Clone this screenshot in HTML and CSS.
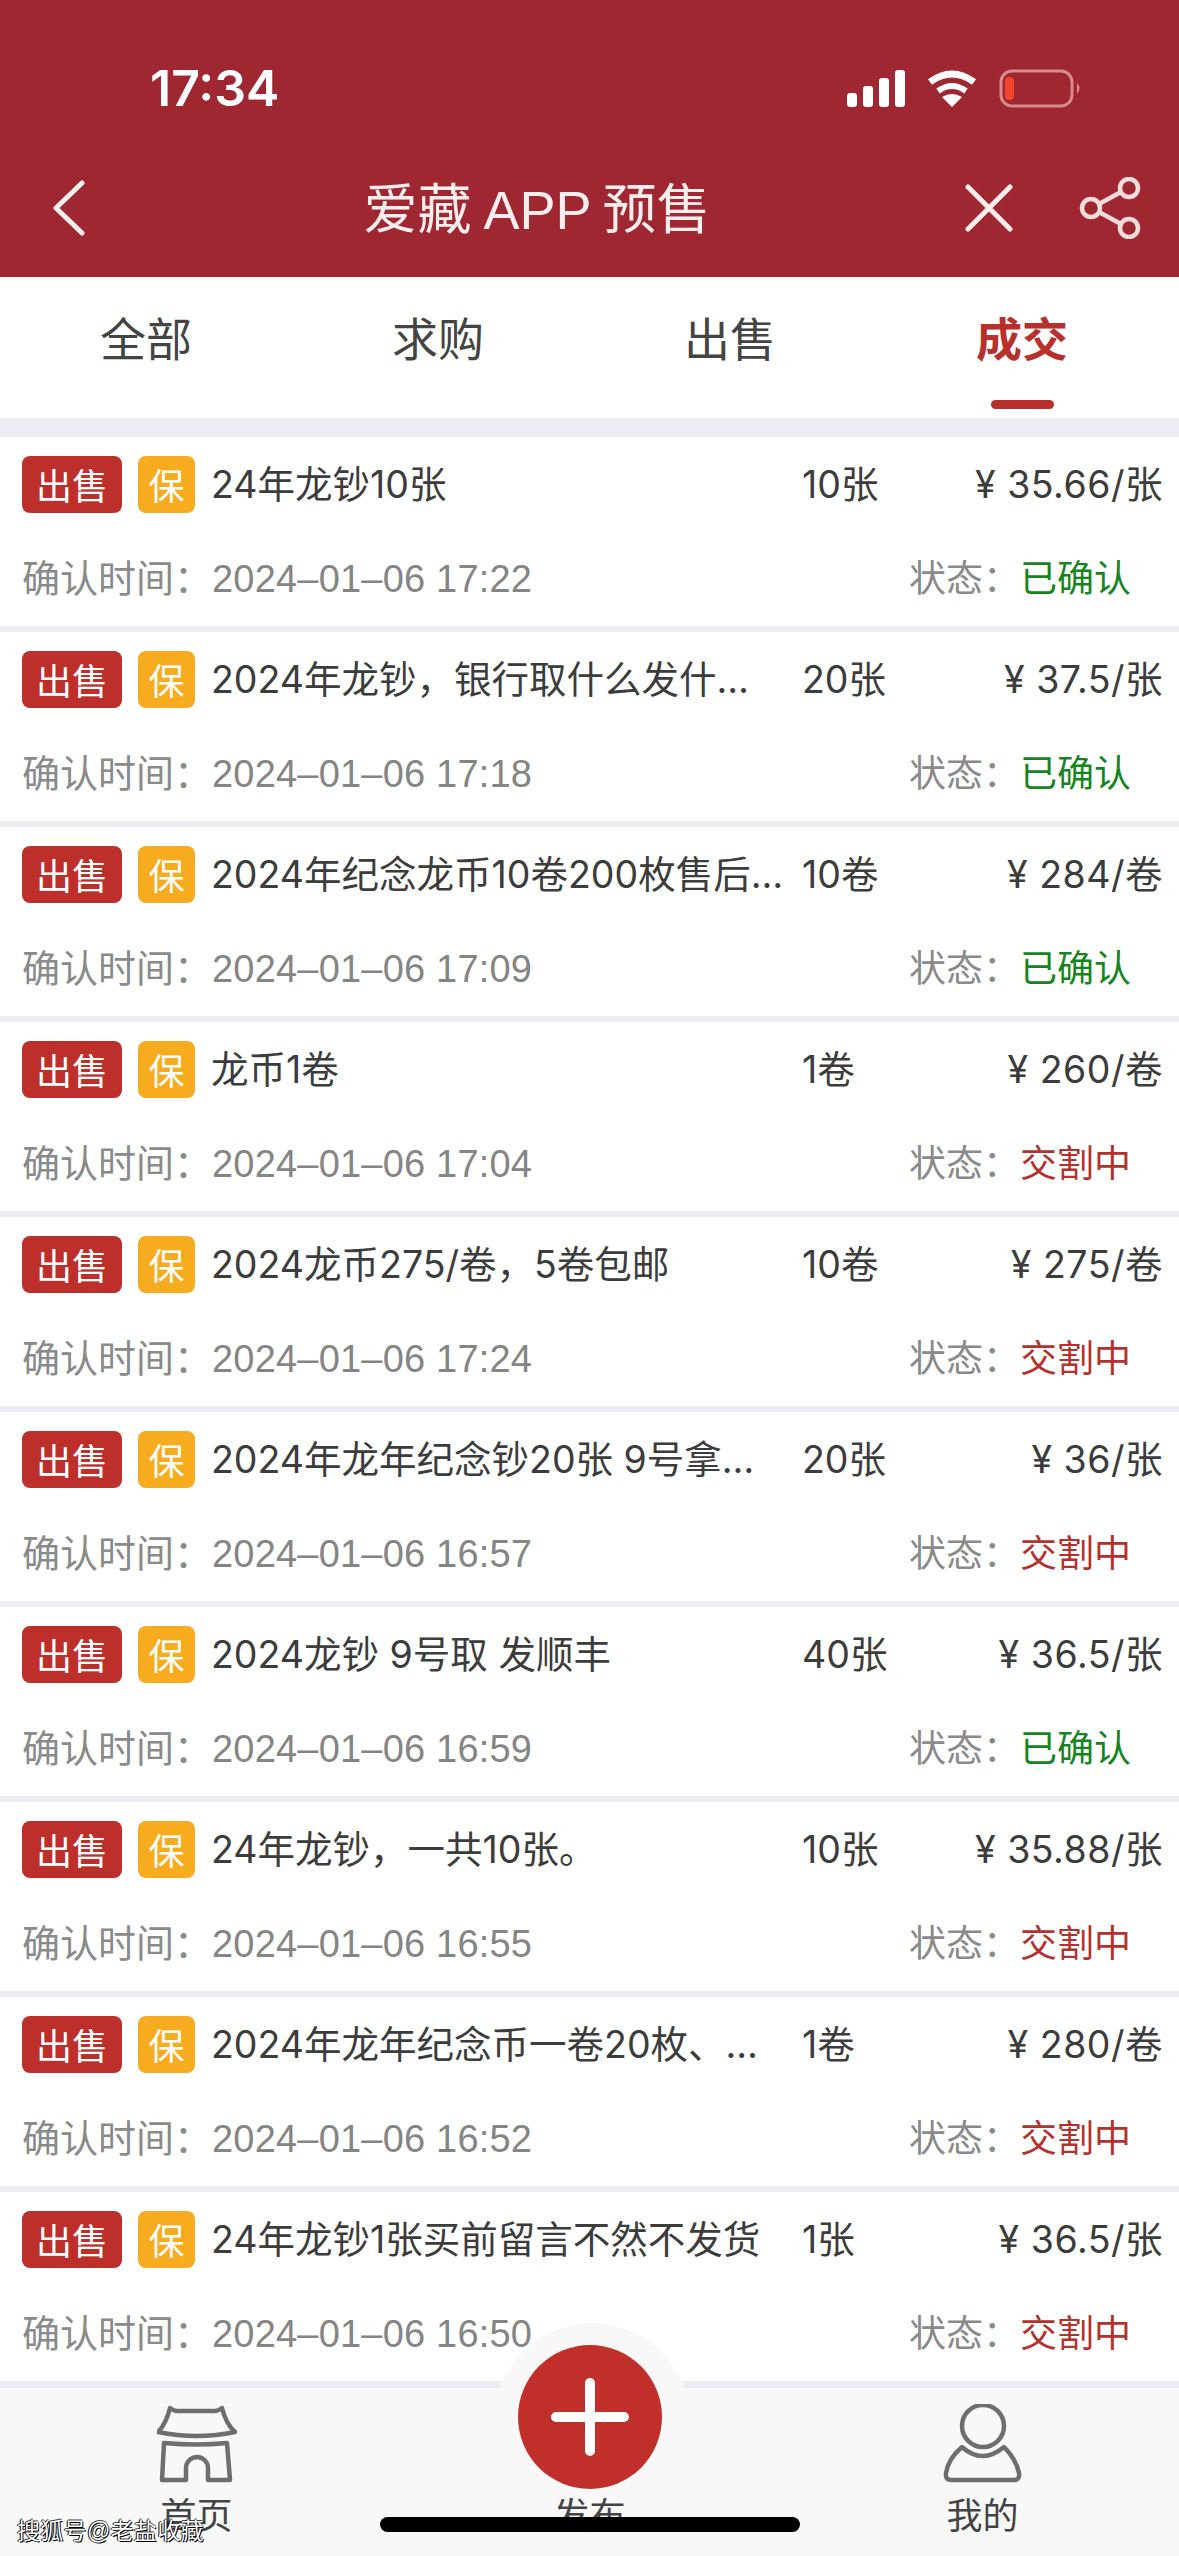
FILE: index.html
```html
<!DOCTYPE html>
<html lang="zh-CN">
    <head>
        <meta charset="UTF-8">
        <title>爱藏 APP 预售</title>
        <link rel="stylesheet" href="styles.css">
    </head>
    <body>
    <div class="page">
        <header class="head">
            <div class="status-bar">
                <div class="clock">17:34</div>
                <div class="status-icons">
                    <svg class="icon-signal" width="58" height="37" viewBox="0 0 58 37">
                        <rect x="0" y="23" width="10" height="14" rx="3"/>
                        <rect x="16" y="16" width="10" height="21" rx="3"/>
                        <rect x="32" y="8" width="10" height="29" rx="3"/>
                        <rect x="48" y="0" width="10" height="37" rx="3"/>
                    </svg>
                    <svg class="icon-wifi" width="50" height="37" viewBox="0 0 50 37">
                        <path d="M3 12 Q25 -4 47 12" fill="none" stroke="#fff" stroke-width="7"/>
                        <path d="M11 21 Q25 11 39 21" fill="none" stroke="#fff" stroke-width="6"/>
                        <path d="M25 37 L15 27 Q25 21 35 27 Z" fill="#fff"/>
                    </svg>
                    <svg width="83" height="39" viewBox="0 0 83 39">
                        <rect x="2" y="2" width="71" height="35" rx="11" fill="none" stroke="#d98b90" stroke-width="3"/>
                        <rect x="6" y="8" width="9" height="23" rx="4" fill="#f4452c"/>
                        <path d="M78 14 Q83 19 78 25 Z" fill="#d98b90"/>
                    </svg>
                </div>
            </div>
            <nav class="nav-bar">
                <svg class="nav-back" width="32" height="56" viewBox="0 0 32 56">
                    <polyline points="29,3 3,28 29,53" fill="none" stroke="#f9eeee" stroke-width="5" stroke-linecap="round" stroke-linejoin="round"/>
                </svg>
                <div class="nav-title">爱藏 APP 预售</div>
                <svg class="nav-close" width="48" height="48" viewBox="0 0 48 48">
                    <path d="M3 3 L45 45 M45 3 L3 45" fill="none" stroke="#f9eeee" stroke-width="5" stroke-linecap="round"/>
                </svg>
                <svg class="nav-share" width="62" height="62" viewBox="0 0 62 62">
                    <path d="M20 27 L42 15 M20 35 L42 47" stroke="#f3dcdc" stroke-width="4.5" fill="none"/>
                    <circle cx="12" cy="31" r="9" fill="none" stroke="#f3dcdc" stroke-width="4.5"/>
                    <circle cx="50" cy="11" r="9" fill="none" stroke="#f3dcdc" stroke-width="4.5"/>
                    <circle cx="50" cy="51" r="9" fill="none" stroke="#f3dcdc" stroke-width="4.5"/>
                </svg>
            </nav>
        </header>

        <div class="tabs">
            <div class="tab"><span class="tab-text">全部</span></div>
            <div class="tab"><span class="tab-text">求购</span></div>
            <div class="tab"><span class="tab-text">出售</span></div>
            <div class="tab tab-on"><span class="tab-text">成交</span><span class="tab-line"></span></div>
        </div>

        <section class="list">
            <div class="row">
                <div class="row-top">
                    <span class="badge badge-sell">出售</span><span class="badge badge-safe">保</span>
                    <div class="row-title">24年龙钞10张</div>
                    <div class="row-count">10张</div>
                    <div class="row-price">¥ 35.66/张</div>
                </div>
                <div class="row-meta">
                    <div class="meta-time"><span class="meta-label">确认时间：</span>2024–01–06 17:22</div>
                    <div class="meta-state"><span class="meta-label">状态：</span><span class="state-done">已确认</span></div>
                </div>
            </div>
            <div class="row">
                <div class="row-top">
                    <span class="badge badge-sell">出售</span><span class="badge badge-safe">保</span>
                    <div class="row-title">2024年龙钞，银行取什么发什…</div>
                    <div class="row-count">20张</div>
                    <div class="row-price">¥ 37.5/张</div>
                </div>
                <div class="row-meta">
                    <div class="meta-time"><span class="meta-label">确认时间：</span>2024–01–06 17:18</div>
                    <div class="meta-state"><span class="meta-label">状态：</span><span class="state-done">已确认</span></div>
                </div>
            </div>
            <div class="row">
                <div class="row-top">
                    <span class="badge badge-sell">出售</span><span class="badge badge-safe">保</span>
                    <div class="row-title">2024年纪念龙币10卷200枚售后…</div>
                    <div class="row-count">10卷</div>
                    <div class="row-price">¥ 284/卷</div>
                </div>
                <div class="row-meta">
                    <div class="meta-time"><span class="meta-label">确认时间：</span>2024–01–06 17:09</div>
                    <div class="meta-state"><span class="meta-label">状态：</span><span class="state-done">已确认</span></div>
                </div>
            </div>
            <div class="row">
                <div class="row-top">
                    <span class="badge badge-sell">出售</span><span class="badge badge-safe">保</span>
                    <div class="row-title">龙币1卷</div>
                    <div class="row-count">1卷</div>
                    <div class="row-price">¥ 260/卷</div>
                </div>
                <div class="row-meta">
                    <div class="meta-time"><span class="meta-label">确认时间：</span>2024–01–06 17:04</div>
                    <div class="meta-state"><span class="meta-label">状态：</span><span class="state-deal">交割中</span></div>
                </div>
            </div>
            <div class="row">
                <div class="row-top">
                    <span class="badge badge-sell">出售</span><span class="badge badge-safe">保</span>
                    <div class="row-title">2024龙币275/卷，5卷包邮</div>
                    <div class="row-count">10卷</div>
                    <div class="row-price">¥ 275/卷</div>
                </div>
                <div class="row-meta">
                    <div class="meta-time"><span class="meta-label">确认时间：</span>2024–01–06 17:24</div>
                    <div class="meta-state"><span class="meta-label">状态：</span><span class="state-deal">交割中</span></div>
                </div>
            </div>
            <div class="row">
                <div class="row-top">
                    <span class="badge badge-sell">出售</span><span class="badge badge-safe">保</span>
                    <div class="row-title">2024年龙年纪念钞20张 9号拿…</div>
                    <div class="row-count">20张</div>
                    <div class="row-price">¥ 36/张</div>
                </div>
                <div class="row-meta">
                    <div class="meta-time"><span class="meta-label">确认时间：</span>2024–01–06 16:57</div>
                    <div class="meta-state"><span class="meta-label">状态：</span><span class="state-deal">交割中</span></div>
                </div>
            </div>
            <div class="row">
                <div class="row-top">
                    <span class="badge badge-sell">出售</span><span class="badge badge-safe">保</span>
                    <div class="row-title">2024龙钞 9号取 发顺丰</div>
                    <div class="row-count">40张</div>
                    <div class="row-price">¥ 36.5/张</div>
                </div>
                <div class="row-meta">
                    <div class="meta-time"><span class="meta-label">确认时间：</span>2024–01–06 16:59</div>
                    <div class="meta-state"><span class="meta-label">状态：</span><span class="state-done">已确认</span></div>
                </div>
            </div>
            <div class="row">
                <div class="row-top">
                    <span class="badge badge-sell">出售</span><span class="badge badge-safe">保</span>
                    <div class="row-title">24年龙钞，一共10张。</div>
                    <div class="row-count">10张</div>
                    <div class="row-price">¥ 35.88/张</div>
                </div>
                <div class="row-meta">
                    <div class="meta-time"><span class="meta-label">确认时间：</span>2024–01–06 16:55</div>
                    <div class="meta-state"><span class="meta-label">状态：</span><span class="state-deal">交割中</span></div>
                </div>
            </div>
            <div class="row">
                <div class="row-top">
                    <span class="badge badge-sell">出售</span><span class="badge badge-safe">保</span>
                    <div class="row-title">2024年龙年纪念币一卷20枚、…</div>
                    <div class="row-count">1卷</div>
                    <div class="row-price">¥ 280/卷</div>
                </div>
                <div class="row-meta">
                    <div class="meta-time"><span class="meta-label">确认时间：</span>2024–01–06 16:52</div>
                    <div class="meta-state"><span class="meta-label">状态：</span><span class="state-deal">交割中</span></div>
                </div>
            </div>
            <div class="row">
                <div class="row-top">
                    <span class="badge badge-sell">出售</span><span class="badge badge-safe">保</span>
                    <div class="row-title">24年龙钞1张买前留言不然不发货</div>
                    <div class="row-count">1张</div>
                    <div class="row-price">¥ 36.5/张</div>
                </div>
                <div class="row-meta">
                    <div class="meta-time"><span class="meta-label">确认时间：</span>2024–01–06 16:50</div>
                    <div class="meta-state"><span class="meta-label">状态：</span><span class="state-deal">交割中</span></div>
                </div>
            </div>
        </section>

        <footer class="foot">
            <div class="foot-bump"></div>
            <div class="foot-item">
                <svg class="foot-icon" width="80" height="80" viewBox="0 0 80 80">
                    <path d="M1 28 Q9 20 13 4 Q17 7 20 7 H58 Q61 7 65 4 Q69 20 78 28 Q40 36 1 28 Z" fill="none" stroke="#6e6e6e" stroke-width="4.5" stroke-linejoin="round"/>
                    <path d="M7 39 Q40 42 70 39 L73 76 H51 V64 A11 11 0 0 0 29 64 V76 H5 Z" fill="none" stroke="#6e6e6e" stroke-width="4.5" stroke-linejoin="round"/>
                </svg>
                <div class="foot-text">首页</div>
            </div>
            <div class="foot-item">
                <div class="foot-icon"></div>
                <div class="foot-text">发布</div>
            </div>
            <div class="foot-item">
                <svg class="foot-icon" width="80" height="80" viewBox="0 0 80 80">
                    <circle cx="40" cy="22" r="21" fill="none" stroke="#6e6e6e" stroke-width="4.5"/>
                    <path d="M19 43 Q5 55 3 69 Q2 76 8 76 H71 Q77 76 76 69 Q73 55 61 43 Q50 52 40 52 Q29 52 19 43 Z" fill="none" stroke="#6e6e6e" stroke-width="4.5" stroke-linejoin="round"/>
                </svg>
                <div class="foot-text">我的</div>
            </div>
            <div class="foot-add">
                <svg width="80" height="80" viewBox="0 0 80 80">
                    <path d="M40 6 V74 M6 40 H74" stroke="#fff" stroke-width="10" stroke-linecap="round"/>
                </svg>
            </div>
            <div class="home-line"></div>
            <div class="watermark">搜狐号@老盐收藏</div>
        </footer>
    </div>
    </body>
</html>
```

FILE: styles.css
```css
html, body {
    margin: 0;
    padding: 0;
}
body {
    font-family: "Liberation Sans", "Noto Sans CJK SC", sans-serif;
    color: #3c3c3c;
}
.page {
    width: 1179px;
    height: 2556px;
    display: flex;
    flex-direction: column;
    overflow: hidden;
    background: #ecedf3;
}

/* 顶部 */
.head {
    height: 277px;
    flex: none;
    background: #9f2731;
    color: #fff;
}
.status-bar {
    height: 48px;
    padding: 64px 97px 0 150px;
    display: flex;
    justify-content: space-between;
    align-items: center;
}
.clock {
    font: 600 50px/48px Inter, sans-serif;
}
.status-icons {
    display: flex;
    align-items: center;
    gap: 22px;
}
.icon-signal {
    fill: #fff;
}
.nav-bar {
    height: 120px;
    margin-top: 36px;
    padding: 0 38px 0 53px;
    display: flex;
    align-items: center;
}
.nav-title {
    flex: 1;
    margin-left: 24px;
    padding-bottom: 6px;
    text-align: center;
    font-size: 54px;
    word-spacing: -3px;
    color: #f9eeee;
}
.nav-close {
    margin-right: 66px;
}

/* tab */
.tabs {
    height: 141px;
    flex: none;
    padding-right: 11px;
    display: flex;
    background: #fff;
}
.tab {
    flex: 1;
    padding-top: 36px;
    display: flex;
    flex-direction: column;
    align-items: center;
    font-size: 46px;
    line-height: 54px;
    color: #444;
}
.tab-on {
    color: #b8302b;
    font-weight: 700;
}
.tab-line {
    width: 63px;
    height: 9px;
    margin-top: 33px;
    border-radius: 5px;
    background: #b8302b;
}

/* 列表 */
.list {
    flex: 1;
    padding-top: 19px;
    overflow: hidden;
}
.row {
    height: 170px;
    margin-bottom: 6px;
    padding: 19px 16px 0 22px;
    background: #fff;
}
.row-top {
    height: 57px;
    display: flex;
    align-items: center;
    font-family: Inter, "Noto Sans CJK SC", sans-serif;
    font-size: 37.5px;
    white-space: nowrap;
}
.badge {
    height: 57px;
    line-height: 56px;
    border-radius: 8px;
    text-align: center;
    font-family: "Noto Sans CJK SC", sans-serif;
    font-size: 36px;
    color: #fff;
}
.badge-sell {
    width: 100px;
    margin-right: 16px;
    background: #bd2f2a;
}
.badge-safe {
    width: 57px;
    margin-right: 16px;
    background: #f7ab1e;
}
.row-title {
    width: 591px;
    padding-bottom: 6px;
}
.row-count {
    flex: 1;
    padding-bottom: 6px;
}
.row-price {
    padding-bottom: 6px;
    letter-spacing: 0.5px;
}
.row-meta {
    height: 50px;
    margin-top: 41px;
    display: flex;
    justify-content: space-between;
    font-size: 38px;
    line-height: 50px;
    letter-spacing: 0.2px;
    color: #858585;
}
.meta-label {
    color: #8a8a8a;
    letter-spacing: 0;
}
.meta-state {
    margin-right: 32px;
    padding-top: 1px;
    font-size: 37px;
    letter-spacing: 0;
}
.state-done {
    color: #16851f;
}
.state-deal {
    color: #b3322d;
}

/* 底部 */
.foot {
    height: 168px;
    flex: none;
    position: relative;
    display: flex;
    background: #f8f8f9;
}
.foot-bump {
    position: absolute;
    left: 494px;
    top: -65px;
    width: 196px;
    height: 196px;
    border-radius: 50%;
    background: #f8f8f9;
}
.foot-item {
    flex: 1;
    position: relative;
    padding-top: 16px;
    display: flex;
    flex-direction: column;
    align-items: center;
}
.foot-icon {
    display: block;
    width: 80px;
    height: 80px;
}
.foot-text {
    margin-top: 11px;
    font-size: 36px;
    line-height: 44px;
    color: #444;
}
.foot-add {
    position: absolute;
    left: 518px;
    top: -43px;
    width: 144px;
    height: 144px;
    display: flex;
    align-items: center;
    justify-content: center;
    border-radius: 50%;
    background: #c12f2a;
}
.home-line {
    position: absolute;
    left: 380px;
    top: 129px;
    width: 420px;
    height: 15px;
    border-radius: 8px;
    background: #000;
}
.watermark {
    position: absolute;
    left: 17px;
    top: 129px;
    font-size: 23px;
    letter-spacing: 0.3px;
    line-height: 28px;
    color: #fff;
    white-space: nowrap;
    text-shadow: 1px 1px 0 #000, -1px 0 0 #000, 0 -1px 0 #444;
}
```
